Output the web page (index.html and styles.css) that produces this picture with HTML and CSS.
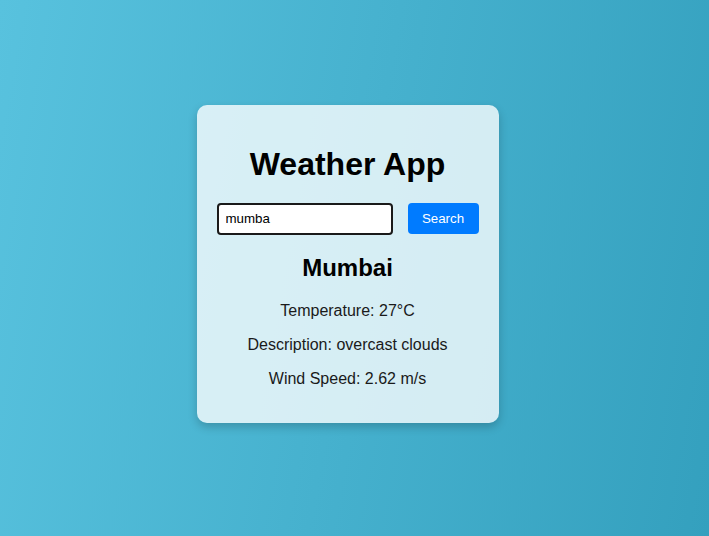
FILE: index.html
```html
<!DOCTYPE html>
<html lang="en">
<head>
<meta charset="utf-8">
<title>Weather App</title>
<link rel="stylesheet" href="styles.css">
</head>
<body>
  <div class="card">
    <h1 class="title">Weather App</h1>
    <div class="search">
      <input class="city-input" type="text" value="mumba">
      <button class="search-btn">Search</button>
    </div>
    <div class="result">
      <h2 class="city">Mumbai</h2>
      <p class="info">Temperature: 27°C</p>
      <p class="info">Description: overcast clouds</p>
      <p class="info">Wind Speed: 2.62 m/s</p>
    </div>
  </div>
</body>
</html>
```
FILE: styles.css
```css
html, body {
  height: 100%;
}
body {
  margin: 0;
  font-family: "Liberation Sans", Arial, sans-serif;
  background: linear-gradient(100deg, #58c2de 0%, #34a0be 100%);
  display: flex;
  align-items: center;
  justify-content: center;
  padding: 0 14px 9px 0;
  box-sizing: border-box;
}
.card {
  width: 302px;
  box-sizing: border-box;
  padding: 20px;
  background: rgba(255, 255, 255, 0.78);
  border-radius: 10px;
  box-shadow: 0 4px 10px rgba(0, 0, 0, 0.2);
  text-align: center;
}
.title {
  font-size: 32px;
  margin: 21px 0 20px;
  color: #000;
}
.search {
  display: flex;
  justify-content: center;
  gap: 15px;
}
.city-input {
  width: 176px;
  height: 32px;
  box-sizing: border-box;
  padding: 0 7px;
  border: 2px solid #1a1a1a;
  border-radius: 4px;
  font-family: "Liberation Sans", Arial, sans-serif;
  font-size: 13.33px;
  color: #000;
  background: #fff;
  outline: none;
}
.search-btn {
  width: 71px;
  height: 31px;
  border: none;
  border-radius: 4px;
  background: #007bff;
  color: #fff;
  font-family: "Liberation Sans", Arial, sans-serif;
  font-size: 13.33px;
}
.city {
  font-size: 24px;
  margin: 19px 0 20px;
  color: #000;
}
.info {
  font-size: 16px;
  margin: 16px 0;
  color: #1a1a1a;
}
.info:last-child {
  margin-bottom: 15px;
}
```
